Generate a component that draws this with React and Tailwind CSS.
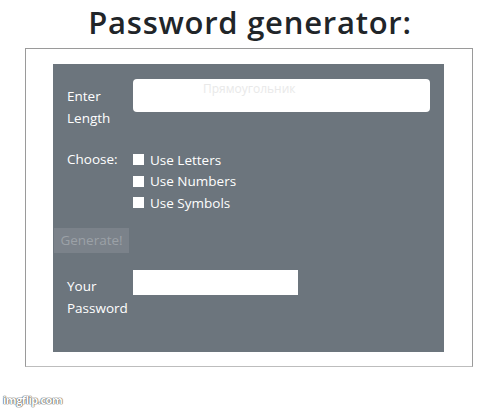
import React from 'react';

function Check({ label }) {
  return (
    <label className="flex items-center h-[21.5px]">
      <input type="checkbox" className="appearance-none w-[11px] h-[11px] bg-white mr-[6px] rounded-none" />
      <span>{label}</span>
    </label>
  );
}

export default function App() {
  return (
    <div className="w-[500px] h-[409px] bg-white relative overflow-hidden" style={{ fontFamily: '"Open Sans", "Noto Sans", sans-serif' }}>
      <h1 className="text-center text-[31px] font-semibold text-[#212529] pt-[2px] leading-[40px] tracking-[0.75px]">
        Password generator:
      </h1>
      <div className="ml-[25px] mt-[6px] w-[448px] h-[319px] border border-[#9a9a9a] border-b-[#bdbdbd] pt-[15px] pl-[27px]">
        <div className="w-[391px] h-[288px] bg-[#6c757d] text-white text-[13.5px] pt-[15px]">
          <div className="flex">
            <div className="w-[80px] pl-[14px] pt-[6px] leading-[22px]">
              Enter<br />Length
            </div>
            <div className="w-[297px] h-[33px] bg-white rounded-[4px] pl-[70px] pt-[2px]">
              <span className="text-[12px] leading-[16px] text-[#e9e9e9] block">Прямоугольник</span>
            </div>
          </div>
          <div className="flex mt-[20px]">
            <div className="w-[80px] pl-[14px] leading-[21.5px]">Choose:</div>
            <div className="flex flex-col">
              <Check label="Use Letters" />
              <Check label="Use Numbers" />
              <Check label="Use Symbols" />
            </div>
          </div>
          <button className="mt-[14px] ml-[1px] w-[75px] h-[25px] bg-[#7b828a] text-[#9ba1a7] text-[13.5px] leading-[25px]">
            Generate!
          </button>
          <div className="flex mt-[17px]">
            <div className="w-[80px] pl-[14px] pt-[5px] leading-[22px]">
              Your<br />Password
            </div>
            <div className="w-[165px] h-[25px] bg-white"></div>
          </div>
        </div>
      </div>
      <div className="absolute left-[3px] top-[393px] text-[11px] font-bold text-white leading-[14px] tracking-[-0.5px]" style={{ textShadow: '0 0 1px #555, 0 0 1px #555, 0 0 1px #555' }}>
        imgflip.com
      </div>
    </div>
  );
}
